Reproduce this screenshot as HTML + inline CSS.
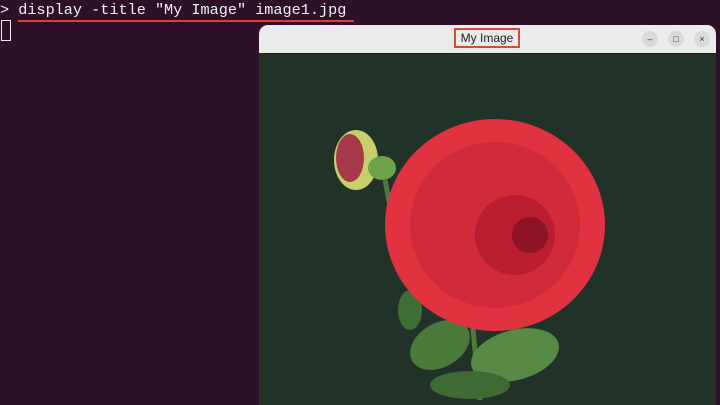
<!DOCTYPE html>
<html><head><style>
body{margin:0;width:720px;height:401px;background:#2e1128;overflow:hidden;position:relative;font-family:"Liberation Mono",monospace}
.cmd{position:absolute;left:0;top:0;color:#f2f2f2;font-size:15.2px;line-height:20px;white-space:pre}
.ul{position:absolute;left:18px;top:20px;width:336px;height:2px;background:#d8402f}
.cur{position:absolute;left:1px;top:20px;width:8px;height:19px;border:1px solid #eee}
.win{position:absolute;left:259px;top:25px;width:457px;height:380px;background:#ebebeb;border-radius:9px 9px 0 0;overflow:hidden}
.tb{height:28px;position:relative;border-bottom:1px solid #222}
.title{position:absolute;left:195px;top:3px;width:66px;height:20px;border:2px solid #d84a35;font:12px "Liberation Sans",sans-serif;text-align:center;color:#222;box-sizing:border-box;line-height:17px}
.btn{position:absolute;top:6px;width:16px;height:16px;border-radius:50%;background:#dadada;font:9px "Liberation Sans",sans-serif;text-align:center;line-height:16px;color:#333}
.img{position:absolute;left:0;top:29px;width:457px;height:351px;background:#213228}
</style></head><body>
<div class="cmd">&gt; display -title "My Image" image1.jpg</div>
<div class="ul"></div><div class="cur"></div>
<div class="win">
<div class="tb"><div class="title">My Image</div>
<div class="btn" style="left:383px">–</div><div class="btn" style="left:409px">□</div><div class="btn" style="left:435px">×</div></div>
<div class="img">
<svg width="457" height="351" viewBox="259 54 457 351">
<path d="M385 180 L400 260 L470 300 L480 400" stroke="#4d7a3a" stroke-width="5" fill="none"/>
<ellipse cx="440" cy="345" rx="32" ry="22" fill="#4a7a3c" transform="rotate(-30 440 345)"/>
<ellipse cx="515" cy="355" rx="45" ry="25" fill="#578a45" transform="rotate(-15 515 355)"/>
<ellipse cx="410" cy="310" rx="12" ry="20" fill="#3f6e35"/>
<ellipse cx="470" cy="385" rx="40" ry="14" fill="#3e6a33"/>
<ellipse cx="495" cy="225" rx="110" ry="106" fill="#e0323f"/>
<ellipse cx="495" cy="225" rx="85" ry="83" fill="#d12a38"/>
<ellipse cx="515" cy="235" rx="40" ry="40" fill="#b81d30"/>
<ellipse cx="530" cy="235" rx="18" ry="18" fill="#8c1425"/>
<ellipse cx="356" cy="160" rx="22" ry="30" fill="#c7cf6a"/>
<ellipse cx="350" cy="158" rx="14" ry="24" fill="#a8394a"/>
<ellipse cx="382" cy="168" rx="14" ry="12" fill="#6da34a"/>
</svg></div></div>
</body></html>
